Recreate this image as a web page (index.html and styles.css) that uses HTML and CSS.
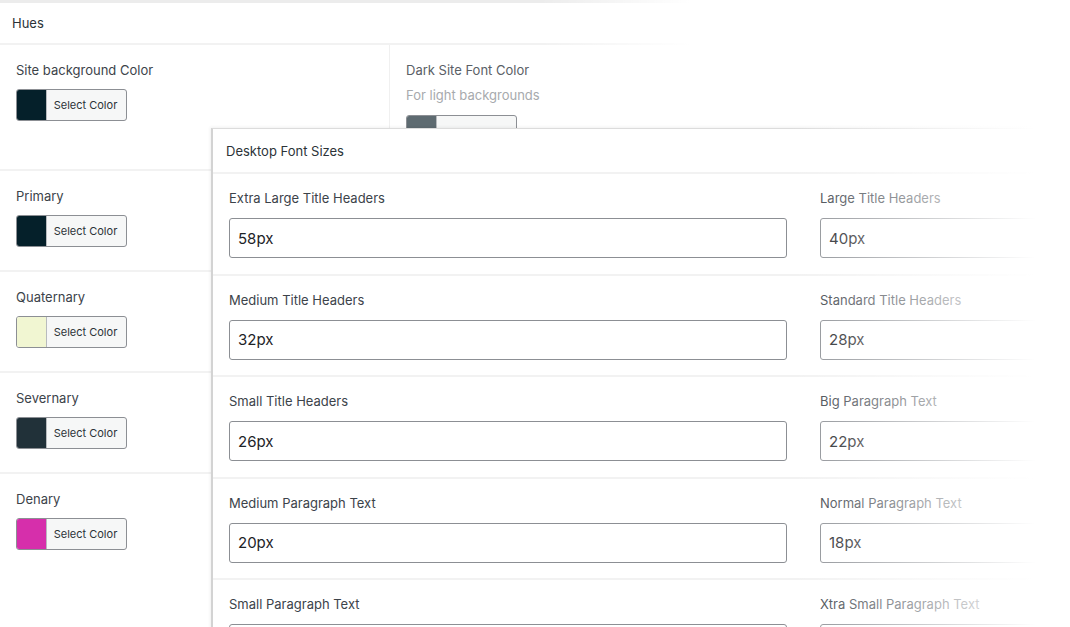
FILE: index.html
```html
<!DOCTYPE html>
<html lang="en">
<head>
<meta charset="utf-8">
<title>Hues</title>
<link rel="stylesheet" href="styles.css">
</head>
<body>
<div class="stage">
  <section class="hues">
    <div class="hues-head">Hues</div>
    <div class="hues-body">
      <div class="col col-left">
        <div class="row row-first">
          <div class="label">Site background Color</div>
          <button class="picker"><span class="swatch sw-dark"></span><span class="pick-text">Select Color</span></button>
        </div>
        <div class="row">
          <div class="label">Primary</div>
          <button class="picker"><span class="swatch sw-dark"></span><span class="pick-text">Select Color</span></button>
        </div>
        <div class="row">
          <div class="label">Quaternary</div>
          <button class="picker"><span class="swatch sw-light"></span><span class="pick-text">Select Color</span></button>
        </div>
        <div class="row">
          <div class="label">Severnary</div>
          <button class="picker"><span class="swatch sw-slate"></span><span class="pick-text">Select Color</span></button>
        </div>
        <div class="row row-last">
          <div class="label">Denary</div>
          <button class="picker"><span class="swatch sw-pink"></span><span class="pick-text">Select Color</span></button>
        </div>
      </div>
      <div class="col col-right">
        <div class="row row-first">
          <div class="label label-soft">Dark Site Font Color</div>
          <div class="desc">For light backgrounds</div>
          <button class="picker"><span class="swatch sw-gray"></span><span class="pick-text">Select Color</span></button>
        </div>
      </div>
    </div>
    <div class="bg-fade"></div>
  </section>

  <section class="fonts">
    <div class="fonts-head">Desktop Font Sizes</div>
    <div class="frow">
      <div class="field"><div class="flabel">Extra Large Title Headers</div><input class="finput" value="58px"></div>
      <div class="field"><div class="flabel">Large Title Headers</div><input class="finput" value="40px"></div>
    </div>
    <div class="frow">
      <div class="field"><div class="flabel">Medium Title Headers</div><input class="finput" value="32px"></div>
      <div class="field"><div class="flabel">Standard Title Headers</div><input class="finput" value="28px"></div>
    </div>
    <div class="frow">
      <div class="field"><div class="flabel">Small Title Headers</div><input class="finput" value="26px"></div>
      <div class="field"><div class="flabel">Big Paragraph Text</div><input class="finput" value="22px"></div>
    </div>
    <div class="frow">
      <div class="field"><div class="flabel">Medium Paragraph Text</div><input class="finput" value="20px"></div>
      <div class="field"><div class="flabel">Normal Paragraph Text</div><input class="finput" value="18px"></div>
    </div>
    <div class="frow">
      <div class="field"><div class="flabel">Small Paragraph Text</div><input class="finput" value="16px"></div>
      <div class="field"><div class="flabel">Xtra Small Paragraph Text</div><input class="finput" value="14px"></div>
    </div>
  </section>
  <div class="fade"></div>
</div>
</body>
</html>
```

FILE: styles.css
```css
* { box-sizing: border-box; }
html, body { margin: 0; padding: 0; background: #fff; }
body {
  font-family: Inter, "Noto Sans", "Liberation Sans", sans-serif;
  color: #3c434a;
}
.stage {
  position: relative;
  width: 1070px;
  height: 627px;
  overflow: hidden;
  background: #fff;
}

/* Background panel */
.hues {
  position: relative;
  border-top: 3px solid #ececec;
  width: 1070px;
}
.hues-head {
  height: 42px;
  padding: 0 12px;
  display: flex;
  align-items: center;
  font-size: 13px;
  color: #2c3338;
  border-bottom: 2px solid #f2f2f2;
}
.hues-body {
  display: grid;
  grid-template-columns: 390px 1fr;
}
.col-left { border-right: 1px solid #f0f0f0; }
.row {
  height: 101px;
  padding: 16px 16px 0;
  border-bottom: 2px solid #f2f2f2;
}
.row-first { height: 126px; }
.row-last { border-bottom: none; height: 160px; }
.col-right .row { border-bottom: none; }
.label {
  font-size: 13px;
  line-height: 18px;
  margin-bottom: 10px;
  color: #3c434a;
}
.label-soft { color: #5a6066; margin-bottom: 7px; }
.desc {
  font-size: 13px;
  line-height: 18px;
  color: #a7aaad;
  margin-bottom: 11px;
}
.picker {
  display: flex;
  align-items: stretch;
  width: 111px;
  height: 32px;
  padding: 0;
  border: 1px solid #8c8f94;
  border-radius: 3px;
  background: #f6f7f7;
  overflow: hidden;
  font-family: inherit;
  cursor: pointer;
}
.swatch {
  width: 30px;
  border-right: 1px solid #b8bbbe;
}
.pick-text {
  flex: 1;
  display: flex;
  align-items: center;
  justify-content: center;
  font-size: 11px;
  color: #2c3338;
  padding-right: 2px;
}
.col-right .pick-text { align-items: flex-end; padding-bottom: 1px; color: #8a8f94; }
.sw-dark { background: #05202a; }
.sw-light { background: #f1f6d2; }
.sw-slate { background: #213139; }
.sw-pink { background: #d62fab; }
.sw-gray { background: #5e6b71; }

.bg-fade {
  position: absolute;
  top: -3px;
  left: 540px;
  width: 530px;
  height: 200px;
  background: linear-gradient(to right, rgba(255,255,255,0) 0, #fff 150px, #fff 100%);
}

/* Overlay panel */
.fonts {
  position: absolute;
  left: 211px;
  top: 128px;
  width: 1000px;
  height: 520px;
  background: #fff;
  border-left: 2px solid #d3d3d3;
  border-top: 1px solid #dcdcdc;
  box-shadow: -1px -1px 3px rgba(0,0,0,0.06);
}
.fonts-head {
  height: 45px;
  padding: 1px 13px 0;
  display: flex;
  align-items: center;
  font-size: 13px;
  color: #2c3338;
  border-bottom: 2px solid #f2f2f2;
}
.frow {
  display: grid;
  grid-template-columns: 558px 558px;
  column-gap: 33px;
  height: 101.5px;
  padding: 15px 16px 0;
  border-bottom: 2px solid #f2f2f2;
}
.flabel {
  font-size: 13px;
  line-height: 18px;
  margin-bottom: 11px;
  color: #3c434a;
}
.finput {
  display: block;
  width: 100%;
  height: 40px;
  border: 1px solid #8c8f94;
  border-radius: 3px;
  padding: 0 8px;
  font-family: inherit;
  font-size: 15px;
  color: #1d2327;
  background: #fff;
}

.fade {
  position: absolute;
  top: 0;
  left: 790px;
  width: 280px;
  height: 627px;
  background: linear-gradient(to right, rgba(255,255,255,0) 0, #fff 245px, #fff 100%);
  pointer-events: none;
}
```
